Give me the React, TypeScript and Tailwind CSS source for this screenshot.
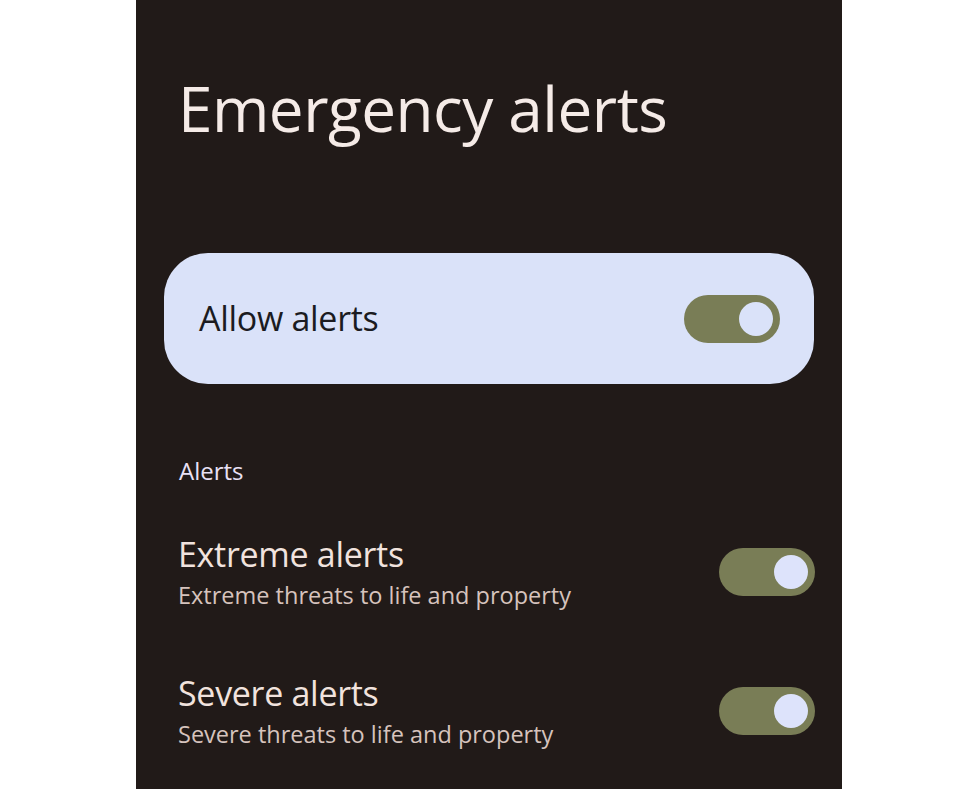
export default function App() {
  const font = { fontFamily: '"Open Sans", "Noto Sans", sans-serif' };

  const Toggle = ({ thumb }: { thumb: string }) => (
    <div className="w-[96px] h-[48px] rounded-full bg-[#797d56] flex items-center justify-end pr-[7px] shrink-0">
      <div className={`w-[34px] h-[34px] rounded-full ${thumb}`} />
    </div>
  );

  const rows = [
    { title: "Extreme alerts", sub: "Extreme threats to life and property" },
    { title: "Severe alerts", sub: "Severe threats to life and property" },
  ];

  return (
    <div className="w-[980px] h-[789px] bg-white flex justify-center overflow-hidden" style={font}>
      <div className="ml-[-2px] w-[706px] h-full bg-[#211a18] flex flex-col">
        <h1 className="pl-[42px] pt-[72px] text-[62px] leading-[72px] text-[#f5ebe7] tracking-[-0.5px]">
          Emergency alerts
        </h1>

        <div className="mt-[109px] mx-[28px] h-[131px] rounded-[44px] bg-[#dae2f9] flex items-center justify-between pl-[35px] pr-[34px]">
          <span className="text-[34px] text-[#1b1b21] tracking-[-0.3px]">Allow alerts</span>
          <Toggle thumb="bg-[#dae2f9]" />
        </div>

        <div className="pl-[43px] mt-[73px] text-[24px] leading-[28px] text-[#e9e1f5] font-medium">Alerts</div>

        <div className="flex flex-col gap-[63px] mt-[49px] pl-[42px] pr-[27px]">
          {rows.map((r) => (
            <div key={r.title} className="flex items-center justify-between">
              <div className="flex flex-col">
                <span className="text-[34px] leading-[40px] text-[#f1e3de] tracking-[-0.3px]">{r.title}</span>
                <span className="text-[23.5px] leading-[30px] text-[#d6c3bd] mt-[6px]">{r.sub}</span>
              </div>
              <Toggle thumb="bg-[#dde3fb]" />
            </div>
          ))}
        </div>
      </div>
    </div>
  );
}
